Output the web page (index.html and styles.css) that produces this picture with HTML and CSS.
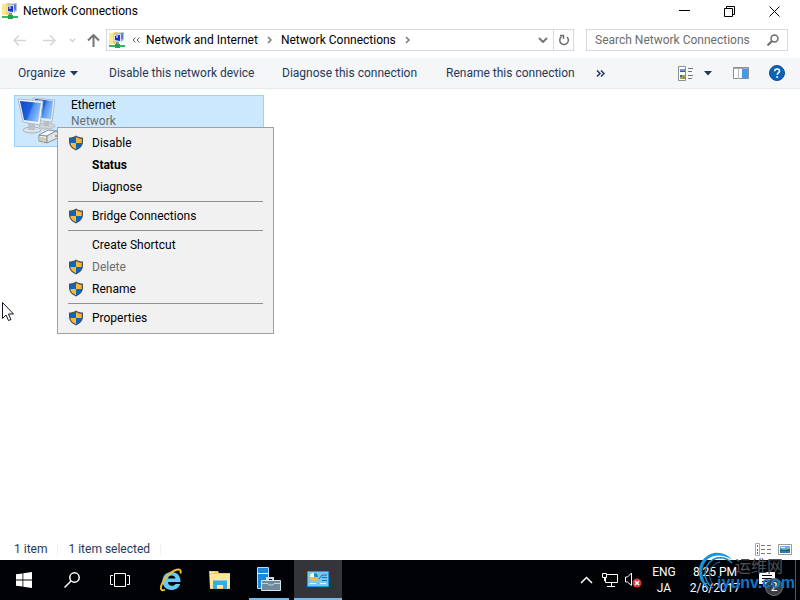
FILE: index.html
```html
<!DOCTYPE html>
<html lang="en">
<head>
    <meta charset="UTF-8">
    <meta name="viewport" content="width=device-width, initial-scale=1.0">
    <title>Network Connections</title>
    <link rel="stylesheet" href="styles.css">
</head>
<body>
    <svg class="sprites" aria-hidden="true">
        <symbol id="shield" viewBox="0 0 16 16">
            <path d="M8 .5C6 2 3.500 2.600 1 2.600V7c0 4 3.500 7 7 8.500 3.500-1.500 7-4.500 7-8.500V2.600C12.500 2.600 10 2 8 .5z" fill="#46515c"/>
            <path d="M8 1.900C6.200 3 4.300 3.600 2.300 3.700V8H8z" fill="#0b66c3"/>
            <path d="M8 1.900C9.800 3 11.700 3.600 13.700 3.700V8H8z" fill="#fdb933"/>
            <path d="M2.300 8c.4 2.800 2.700 4.900 5.700 6.200V8z" fill="#fdb933"/>
            <path d="M13.700 8c-.4 2.800-2.700 4.900-5.700 6.200V8z" fill="#0b66c3"/>
        </symbol>
        <symbol id="net-folder" viewBox="0 0 16 16">
            <path d="M0 1h4l1-1h4v12H0z" fill="#efd36b"/>
            <path d="M0 1h4v11H0z" fill="#f8e794"/>
            <path d="M6 1l9-1v8l-3 2H6z" fill="#b9bfc7"/>
            <path d="M10 2l4-1v6l-3 1z" fill="#5b7be0"/>
            <path d="M5 3l7-1v8l-7-1z" fill="#dfe3e8"/>
            <path d="M6 4l5-1v6l-5-1z" fill="#1731c8"/>
            <path d="M7 4h2v2H7z" fill="#86a8f4"/>
            <path d="M7 10h3v3H7z" fill="#8b949c"/>
            <path d="M0 13h16v2H0z" fill="#36b565"/>
            <path d="M6 12h5v4H6z" fill="#27a050"/>
        </symbol>
    </svg>

    <header class="titlebar">
        <svg class="icon16"><use href="#net-folder"/></svg>
        <h1>Network Connections</h1>
        <button class="win-btn" aria-label="Minimize">
            <svg width="11" height="11"><path d="M0 4.500h11" stroke="#000"/></svg>
        </button>
        <button class="win-btn" aria-label="Restore">
            <svg width="11" height="11" fill="none" stroke="#000"><path d="M.5 2.500h8v8h-8zM2.500 2.500v-2h8v8h-2"/></svg>
        </button>
        <button class="win-btn" aria-label="Close">
            <svg width="11" height="11"><path d="M.5.5l10 10M10.500.5l-10 10" stroke="#000"/></svg>
        </button>
    </header>

    <nav class="navbar">
        <button class="nav-btn" aria-label="Back" disabled>
            <svg width="13" height="11" fill="none" stroke="#d5d5d5" stroke-width="1.500"><path d="M6 .5l-5 5 5 5M1 5.500h12"/></svg>
        </button>
        <button class="nav-btn" aria-label="Forward" disabled>
            <svg width="13" height="11" fill="none" stroke="#d5d5d5" stroke-width="1.500"><path d="M7 .5l5 5-5 5M12 5.500H0"/></svg>
        </button>
        <button class="nav-btn recent" aria-label="Recent locations" disabled>
            <svg width="7" height="5" fill="none" stroke="#cfcfcf" stroke-width="1.500"><path d="M1 1l2.500 2.500L6 1"/></svg>
        </button>
        <button class="nav-btn up" aria-label="Up">
            <svg width="13" height="13" fill="none" stroke="#747474" stroke-width="2"><path d="M1 6.500L6.500 1 12 6.500M6.500 1v12"/></svg>
        </button>
        <div class="address">
            <svg class="icon16"><use href="#net-folder"/></svg>
            <button class="crumb-more" aria-label="More folders">
                <svg width="8" height="6" fill="none" stroke="#666"><path d="M3.500.5L1 3l2.500 2.500M7.500.5L5 3l2.500 2.500"/></svg>
            </button>
            <a class="crumb" href="#">Network and Internet</a>
            <svg class="crumb-arrow" width="5" height="8" fill="none" stroke="#777" stroke-width="1.500"><path d="M1 1l3 3-3 3"/></svg>
            <a class="crumb" href="#">Network Connections</a>
            <svg class="crumb-arrow" width="5" height="8" fill="none" stroke="#777" stroke-width="1.500"><path d="M1 1l3 3-3 3"/></svg>
            <button class="addr-btn history" aria-label="Previous locations">
                <svg width="10" height="6" fill="none" stroke="#777" stroke-width="2"><path d="M1 1l4 4 4-4"/></svg>
            </button>
            <button class="addr-btn refresh" aria-label="Refresh">
                <svg width="12" height="12" fill="none" stroke="#6d6d6d" stroke-width="1.500"><path d="M3.500 2.700A4.300 4.300 0 1 0 9 3M2 1.500h3.500V5"/></svg>
            </button>
        </div>
        <form class="search">
            <input type="text" aria-label="Search Network Connections" placeholder="Search Network Connections">
            <button aria-label="Search" type="button">
                <svg width="12" height="12" fill="none" stroke="#6d6d6d" stroke-width="1.500"><circle cx="7.500" cy="4.500" r="3.500"/><path d="M5 7L.5 11.500" stroke-width="2"/></svg>
            </button>
        </form>
    </nav>

    <div class="toolbar">
        <button class="organize">Organize
            <svg width="8" height="5"><path d="M0 0h8L4 4.500z" fill="#1e395b"/></svg>
        </button>
        <button>Disable this network device</button>
        <button>Diagnose this connection</button>
        <button>Rename this connection</button>
        <button class="overflow" aria-label="More commands">
            <svg width="9" height="7" fill="none" stroke="#1e395b" stroke-width="1.500"><path d="M1 .5l3 3-3 3M5 .5l3 3-3 3"/></svg>
        </button>
        <button class="view" aria-label="Change your view">
            <svg width="16" height="15">
                <path d="M.5.5h7v14h-7z" fill="#fff" stroke="#8d8d8d"/>
                <path d="M2 3h5v3H2z" fill="#5a9bd8"/><path d="M2 5h5v1H2z" fill="#39703a"/>
                <path d="M2 9h5v4H2z" fill="#8fb04f"/><path d="M2 9h2v2H2z" fill="#2868b2"/><path d="M5 11h2v2H5z" fill="#c26a3d"/>
                <path d="M10 2.500h5M10 5.500h4M10 9.500h5M10 12.500h4" stroke="#777"/>
            </svg>
            <svg width="8" height="5"><path d="M0 0h8L4 4.500z" fill="#1e395b"/></svg>
        </button>
        <button class="pane" aria-label="Show the preview pane">
            <svg width="16" height="12"><path d="M.5.5h15v11H.5z" fill="#fff" stroke="#8d8d8d"/><path d="M5.500 1v11" stroke="#bbb"/><path d="M9 1h6v10H9z" fill="#419bea"/><path d="M1 1.500h14" stroke="#aaa"/></svg>
        </button>
        <button class="help" aria-label="Help">
            <svg width="16" height="16"><circle cx="8" cy="8" r="7.500" fill="#0c63ba" stroke="#084c94"/><path d="M5.700 6.200C5.700 3.200 10.500 3.300 10.500 6c0 1.800-2.300 1.800-2.300 3.800" fill="none" stroke="#fff" stroke-width="1.600"/><circle cx="8.200" cy="12" r="1" fill="#fff"/></svg>
        </button>
    </div>

    <main class="content">
        <div class="connection">
            <svg width="46" height="48" viewBox="0 0 46 48">
                <defs>
                    <linearGradient id="screen" x1="0" y1="0" x2="1" y2=".4">
                        <stop offset="0" stop-color="#0d47c9"/>
                        <stop offset=".55" stop-color="#1f62dc"/>
                        <stop offset=".65" stop-color="#4f92f0"/>
                        <stop offset="1" stop-color="#8fc0f8"/>
                    </linearGradient>
                </defs>
                <ellipse cx="31" cy="29" rx="8" ry="3" fill="#cfd3d8" stroke="#b5bcc3"/>
                <path d="M28 22h5v7h-5z" fill="#b6bdc5"/>
                <path d="M17 1l22 2-3 22-19-2z" fill="#e4e8ec" stroke="#b4bcc5"/>
                <path d="M19 2l18 2-2 18-16-2z" fill="url(#screen)"/>
                <ellipse cx="16" cy="33" rx="9" ry="3" fill="#dfe2e5" stroke="#aab1b8"/>
                <path d="M12 26h7v7h-7z" fill="#bac2ca"/>
                <path d="M2 2l25 2-3 24-17-3z" fill="#f0f3f5" stroke="#b0b9c2"/>
                <path d="M4 4l21 2-3 19-14-2z" fill="url(#screen)"/>
                <path d="M37 36c4-1 5-4 9-5" fill="none" stroke="#79b7e0" stroke-width="2"/>
                <path d="M23 38l8 1v7l-8-2z" fill="#eef1f1" stroke="#8b9195"/>
                <path d="M23 38l9-5 8 1-9 5z" fill="#f6f8f8" stroke="#8b9195"/>
                <path d="M31 39l9-5 4 4-5 1 5 1-13 6z" fill="#dde3e6" stroke="#8b9195"/>
                <path d="M25 40v4M27 40v4M29 41v4" stroke="#b3a866"/>
            </svg>
            <div class="connection-text">
                <div>Ethernet</div>
                <div class="sub">Network</div>
            </div>
        </div>
        <div class="menu" role="menu">
            <button role="menuitem"><svg class="icon16"><use href="#shield"/></svg>Disable</button>
            <button role="menuitem" class="default">Status</button>
            <button role="menuitem">Diagnose</button>
            <hr>
            <button role="menuitem"><svg class="icon16"><use href="#shield"/></svg>Bridge Connections</button>
            <hr>
            <button role="menuitem">Create Shortcut</button>
            <button role="menuitem" disabled><svg class="icon16"><use href="#shield"/></svg>Delete</button>
            <button role="menuitem"><svg class="icon16"><use href="#shield"/></svg>Rename</button>
            <hr>
            <button role="menuitem"><svg class="icon16"><use href="#shield"/></svg>Properties</button>
        </div>
        <svg class="cursor" width="13" height="20"><path d="M.5.5v16l3.500-3.500 2.500 5.500 2.500-1-2.500-5.500h5z" fill="#fff" stroke="#15151f"/></svg>
    </main>

    <footer class="statusbar">
        <span class="count">1 item</span>
        <span class="selected">1 item selected</span>
        <button aria-label="Details view">
            <svg width="16" height="13"><path d="M.5.5h4v12h-4z" fill="#fff" stroke="#aaa"/><path d="M2 2h1v2H2z" fill="#3b7a48"/><path d="M2 6h1v2H2z" fill="#3678c9"/><path d="M2 9h1v2H2z" fill="#c33"/><path d="M6 2.500h4M12 2.500h4M6 6.500h4M12 6.500h4M6 10.500h4M12 10.500h4" stroke="#777"/></svg>
        </button>
        <button aria-label="Large icons view">
            <svg width="14" height="11"><path d="M.5.5h13v10H.5z" fill="#fff" stroke="#999"/><path d="M2 2h10v7H2z" fill="#6fb2ea"/><path d="M2 5l4 1 6-1v2H2z" fill="#305d55"/><path d="M2 7h10v2H2z" fill="#2878bd"/><path d="M3 3h4v1H3z" fill="#e4f3ff"/></svg>
        </button>
    </footer>

    <div class="taskbar">
        <button class="task" aria-label="Start">
            <svg width="16" height="16" fill="#fff"><path d="M0 2.300L6.500 1.400v6.200H0zM7.300 1.300L16 0v7.600H7.300zM0 8.400h6.500v6.200L0 13.700zM7.300 8.400H16V16l-8.700-1.300z"/></svg>
        </button>
        <button class="task" aria-label="Search">
            <svg width="16" height="16" fill="none" stroke="#fff" stroke-width="1.500"><circle cx="10.500" cy="5.500" r="4.700"/><path d="M7 9L.5 15.500"/></svg>
        </button>
        <button class="task" aria-label="Task View">
            <svg width="20" height="14" fill="none" stroke="#fff"><path d="M4.500.5h11v13h-11zM3 2.500H.5v9H3M17 2.500h2.500v9H17"/></svg>
        </button>
        <div class="pinned">
            <button class="task" aria-label="Internet Explorer">
                <svg width="24" height="24">
                    <path d="M21.500 14H9c.1 4.500 6 4.800 7.500 2h4.700c-1.200 3.700-4.500 6-8.700 6-5.400 0-9-3.900-9-9s3.600-9 9-9c5.700 0 9.300 4 9 10zM9 10.500h7.500c-.4-4-7-4-7.500 0z" fill="#63cbf5"/>
                    <path d="M6 21.500C2.500 23.500 1 21.500 2.500 17 4.500 11 10 5 15.500 2.500 20 .3 22.500 1.500 21.500 5.500" fill="none" stroke="#f1bd27" stroke-width="2"/>
                </svg>
            </button>
            <button class="task" aria-label="File Explorer">
                <svg width="22" height="18"><path d="M0 0h9l1 2h11v16H1z" fill="#f5cf53"/><path d="M1 3h20v14H1z" fill="#ffe69c"/><path d="M1 1h4v1H1z" fill="#fff2bf"/><path d="M4 10h14v8h-4v-4H8v4H4z" fill="#35ade3"/><path d="M4 9h14v1H4z" fill="#7fcbed"/></svg>
            </button>
            <button class="task running" aria-label="Server Manager">
                <svg width="24" height="24"><path d="M.5.5h11v21H.5z" fill="#1688de" stroke="#b5ddf7"/><path d="M1 6.500h11" stroke="#fff"/><path d="M10 13v-2h6v2" fill="none" stroke="#cfd9df" stroke-width="2"/><path d="M4.500 13.500h19v10h-19z" fill="#6f8b9b" stroke="#d7e3ea"/><path d="M5 16.500h6l1 1.500h4l1-1.500h6" fill="none" stroke="#c3d2db"/></svg>
            </button>
            <button class="task active" aria-label="Network Connections">
                <svg width="22" height="16"><path d="M.5.5h21v15H.5z" fill="#78c8f3" stroke="#199ae4"/><circle cx="7" cy="6" r="4" fill="#f4b942"/><path d="M7 2a4 4 0 0 0-4 4h4z" fill="#fff"/><path d="M7 2a4 4 0 0 1 4 4H7z" fill="#2289cf"/><path d="M12 8l3-4h5M15 6.500h5M15 9.500h5" fill="none" stroke="#176cac"/><path d="M3 12.500h16" stroke="#fff"/><path d="M9 12.500h4" stroke="#e6a43a"/></svg>
            </button>
        </div>

        <div class="tray">
            <button class="tray-btn" aria-label="Show hidden icons">
                <svg width="13" height="8" fill="none" stroke="#fff" stroke-width="1.500"><path d="M1 7l5.500-5.500L12 7"/></svg>
            </button>
            <button class="tray-btn" aria-label="Network">
                <svg width="17" height="14" fill="none" stroke="#fff"><path d="M4 1.500h11.500v8h-12V5M9.500 10v3M5 13.500h8M.5.500h4v4h-4zM2.500 4.500V8"/></svg>
            </button>
            <button class="tray-btn" aria-label="Volume muted">
                <svg width="18" height="16"><path d="M.5 5h2l4-4v12.500L2.500 10h-2z" fill="none" stroke="#fff"/><circle cx="12" cy="11" r="4.500" fill="#dc333b"/><path d="M10 9l4 4M14 9l-4 4" stroke="#fff" stroke-width="1.500"/></svg>
            </button>
            <button class="lang"><span>ENG</span><span>JA</span></button>
            <button class="clock"><span>8:25 PM</span><span>2/6/2017</span></button>
            <button class="action" aria-label="Action center">
                <svg width="16" height="16"><path d="M0 0h16v12H7l-3 3v-3H0z" fill="#fff"/><path d="M3 3.500h10M3 6.500h10M3 9.500h7" stroke="#000"/></svg>
                <span class="badge">2</span>
            </button>
            <button class="desktop" aria-label="Show desktop"></button>
        </div>

        <div class="watermark">
            <svg width="54" height="40" viewBox="0 0 54 40" fill="none">
                <path d="M13 37C-4 29-1 5 17 1c7-1 15 2 18 7C27 2 13 1 7 12c-4 8-1 18 6 25z" fill="#1596dc"/>
                <path d="M16 36C4 28 6 10 20 6c6-1 11 1 15 5" stroke="#1685c6" stroke-width="1.500"/>
                <path d="M17 33C9 25 12 12 23 10" stroke="#147bb8"/>
            </svg>
            <span class="mark-name" lang="zh">运维网</span>
            <span class="mark-site">iyunv.com</span>
        </div>
    </div>
</body>
</html>
```

FILE: styles.css
```css
* {
    margin: 0;
    padding: 0;
    box-sizing: border-box;
}

body {
    font-family: Roboto, 'Noto Sans', sans-serif;
    font-size: 12px;
    line-height: 16px;
    color: #000;
    background: #fff;
    height: 100vh;
    display: flex;
    flex-direction: column;
    overflow: hidden;
}

button,
input {
    font: inherit;
    color: inherit;
    background: none;
    border: none;
    outline: none;
}

button {
    display: flex;
    align-items: center;
    justify-content: center;
    white-space: nowrap;
}

a {
    color: inherit;
    text-decoration: none;
}

svg {
    display: block;
    flex: none;
}

.sprites {
    position: absolute;
    width: 0;
    height: 0;
}

.icon16 {
    width: 16px;
    height: 16px;
}

/* Title bar */
.titlebar {
    display: flex;
    align-items: center;
    height: 22px;
    padding: 0 3px 0 2px;
}

.titlebar h1 {
    flex: 1;
    margin-left: 5px;
    font-size: 12px;
    font-weight: normal;
}

.win-btn {
    width: 45px;
    height: 20px;
}

/* Navigation row */
.navbar {
    display: flex;
    align-items: center;
    height: 36px;
    padding: 0 12px 0 4px;
}

.nav-btn {
    width: 30px;
    height: 22px;
}

.nav-btn.recent {
    width: 16px;
}

.nav-btn.up {
    width: 26px;
}

.address {
    flex: 1;
    display: flex;
    align-items: center;
    height: 22px;
    padding-left: 2px;
    border: 1px solid #d9d9d9;
    white-space: nowrap;
}

.crumb-more {
    width: 21px;
    height: 20px;
}

.crumb-arrow {
    margin: 0 9px;
}

.addr-btn {
    width: 20px;
    height: 20px;
}

.addr-btn.history {
    margin-left: auto;
}

.addr-btn.refresh {
    border-left: 1px solid #d9d9d9;
}

.search {
    display: flex;
    width: 202px;
    height: 22px;
    margin-left: 12px;
    border: 1px solid #d9d9d9;
}

.search input {
    flex: 1;
    min-width: 0;
    padding-left: 8px;
}

.search input::placeholder {
    color: #6d6d6d;
}

.search button {
    width: 28px;
}

/* Command bar */
.toolbar {
    display: grid;
    grid-template-columns: 91px 173px 164px 150px 1fr 55px 16px 36px;
    height: 31px;
    padding: 0 15px 0 18px;
    background: #f5f6f7;
    border-bottom: 1px solid #e8e9ea;
    color: #1e395b;
}

.toolbar button {
    justify-content: flex-start;
}

.toolbar .organize {
    gap: 5px;
}

.toolbar .view {
    gap: 10px;
}

.toolbar .help {
    justify-content: flex-end;
}

/* Connections list */
.content {
    position: relative;
    flex: 1;
    padding: 6px 14px;
}

.connection {
    display: flex;
    width: 250px;
    height: 52px;
    padding: 1px;
    background: #cce8ff;
    border: 1px solid #99d1ff;
}

.connection-text {
    margin-left: 9px;
}

.connection-text .sub {
    color: #6d6d6d;
}

.menu {
    position: absolute;
    left: 57px;
    top: 38px;
    width: 217px;
    padding: 4px 10px;
    background: #f1f1f1;
    border: 1px solid #a0a0a0;
}

.menu button {
    position: relative;
    justify-content: flex-start;
    width: 100%;
    height: 22px;
    padding-left: 24px;
}

.menu .default {
    font-weight: bold;
}

.menu button:disabled {
    color: #6d6d6d;
}

.menu .icon16 {
    position: absolute;
    left: 0;
    top: 3px;
}

.menu hr {
    height: 1px;
    margin: 3px 0;
    border: none;
    background: #919191;
}

.cursor {
    position: absolute;
    left: 2px;
    top: 213px;
}

/* Status bar */
.statusbar {
    display: flex;
    align-items: center;
    height: 22px;
    padding: 0 8px 0 14px;
    color: #1e395b;
}

.statusbar span {
    padding-right: 10px;
    border-right: 1px solid #f0f0f0;
    line-height: 12px;
}

.statusbar .selected {
    margin-right: auto;
    padding-left: 10px;
}

.statusbar button {
    margin-left: 7px;
}

/* Taskbar */
.taskbar {
    position: relative;
    display: flex;
    height: 40px;
    background: #010206;
    color: #fff;
}

.task {
    width: 48px;
    height: 40px;
}

.pinned {
    display: flex;
    gap: 1px;
    margin-left: 3px;
}

.task.running {
    width: 40px;
    margin: 0 4px;
    border-bottom: 2px solid #76b9ed;
}

.task.active {
    background: #343538;
    border-bottom: 2px solid #76b9ed;
}

.tray {
    display: flex;
    margin-left: auto;
}

.tray-btn {
    width: 24px;
}

.lang,
.clock {
    flex-direction: column;
    width: 36px;
}

.clock {
    width: 66px;
}

.action {
    position: relative;
    width: 38px;
}

.badge {
    position: absolute;
    left: 17px;
    top: 18px;
    width: 18px;
    height: 18px;
    border: 1px solid #777;
    border-radius: 50%;
    background: #3b3d40;
    text-align: center;
}

.desktop {
    width: 5px;
    margin-left: 9px;
    border-left: 1px solid #55565a;
}

/* Logo over the tray */
.watermark {
    position: absolute;
    right: 5px;
    top: -8px;
    width: 98px;
    height: 44px;
    pointer-events: none;
}

.mark-name,
.mark-site {
    position: absolute;
    right: 0;
    white-space: nowrap;
}

.mark-name {
    right: 12px;
    top: 5px;
    font-family: 'Noto Sans CJK SC', sans-serif;
    font-size: 16px;
    color: #4c5057;
}

.mark-site {
    top: 23px;
    font-family: 'Liberation Sans', sans-serif;
    font-size: 16px;
    font-weight: bold;
    color: #0f75c9;
}
```
